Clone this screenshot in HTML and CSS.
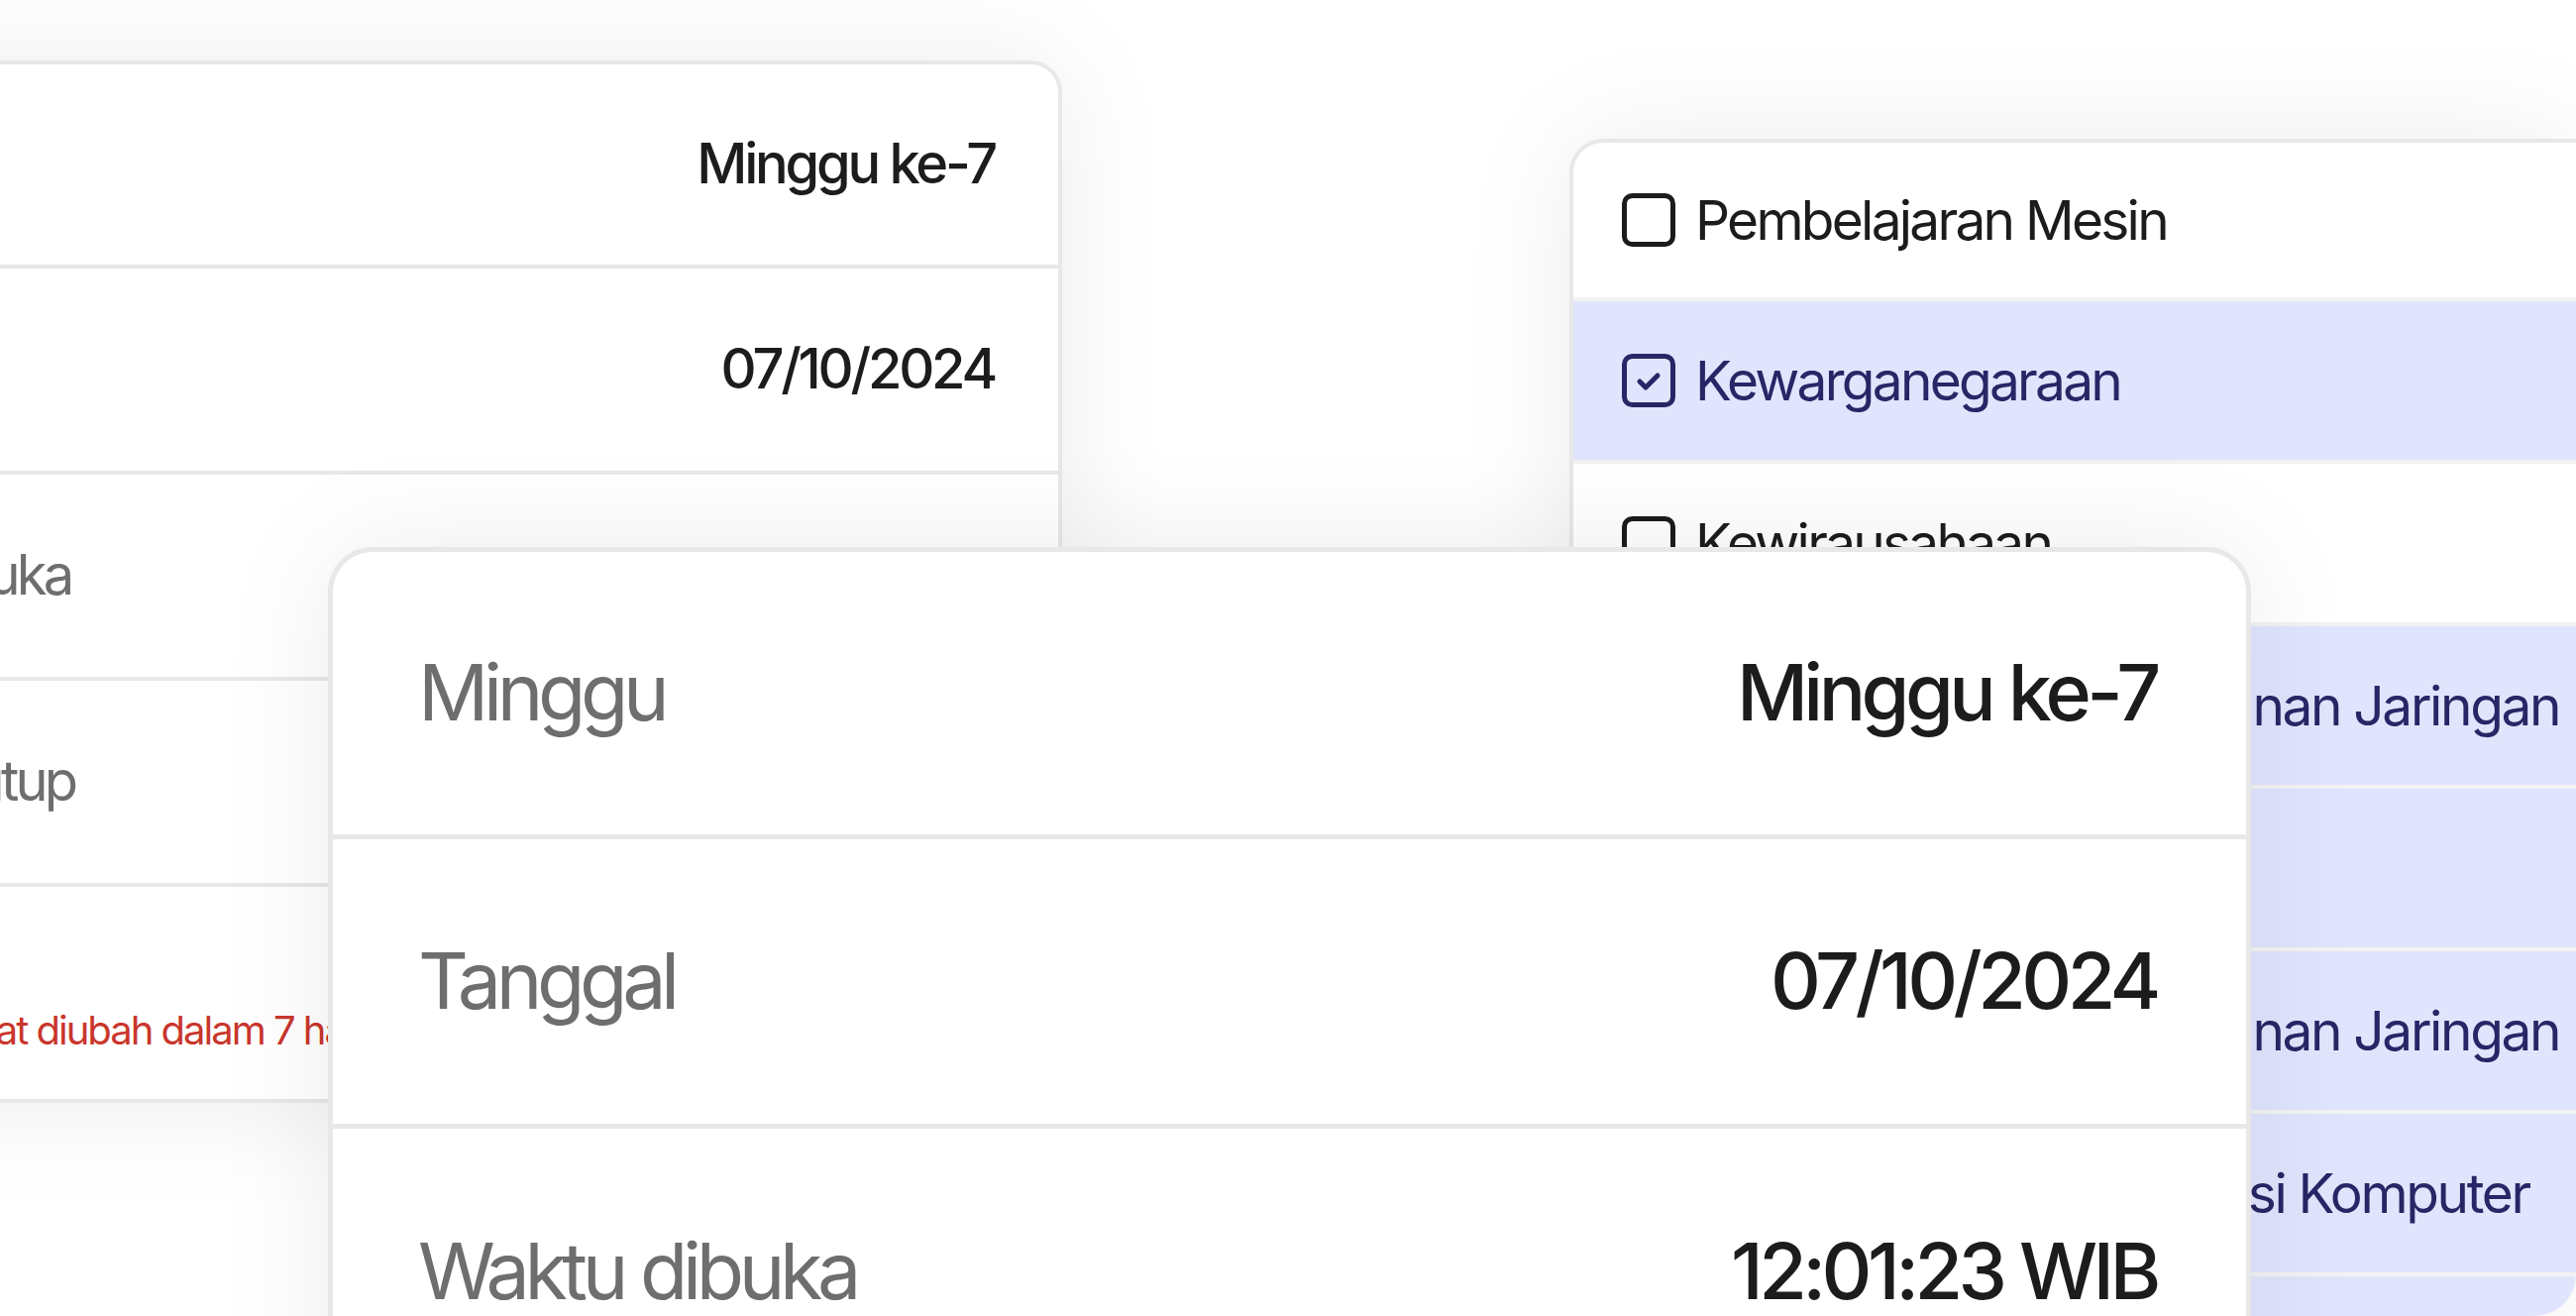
FILE: index.html
```html
<!DOCTYPE html>
<html lang="id">
<head>
<meta charset="utf-8">
<title>Jadwal Presensi</title>
<link rel="stylesheet" href="styles.css">
</head>
<body>
<div class="canvas">

  <section class="card card--back">
    <div class="info-row"><span class="label">Minggu</span><span class="value">Minggu ke-7</span></div>
    <div class="info-row"><span class="label">Tanggal</span><span class="value">07/10/2024</span></div>
    <div class="info-row"><span class="label">Waktu dibuka</span><span class="value">12:01:23 WIB</span></div>
    <div class="info-row"><span class="label">Waktu ditutup</span><span class="value">13:01:23 WIB</span></div>
    <div class="info-row info-row--note">
      <span class="label">Status</span>
      <span class="note">Nilai tidak dapat diubah dalam 7 hari</span>
    </div>
  </section>

  <section class="card card--list">
    <div class="list-item">
      <svg class="check" viewBox="0 0 54 54"><rect x="2.5" y="2.5" width="49" height="49" rx="8"/></svg>
      <span>Pembelajaran Mesin</span>
    </div>
    <div class="list-item is-selected">
      <svg class="check" viewBox="0 0 54 54"><rect x="2.5" y="2.5" width="49" height="49" rx="8"/><path d="M18 28 L24 34 L36 22"/></svg>
      <span>Kewarganegaraan</span>
    </div>
    <div class="list-item">
      <svg class="check" viewBox="0 0 54 54"><rect x="2.5" y="2.5" width="49" height="49" rx="8"/></svg>
      <span>Kewirausahaan</span>
    </div>
    <div class="list-item is-selected">
      <svg class="check" viewBox="0 0 54 54"><rect x="2.5" y="2.5" width="49" height="49" rx="8"/><path d="M18 28 L24 34 L36 22"/></svg>
      <span class="wide">Manajemen dan Keamanan Jaringan</span>
    </div>
    <div class="list-item is-selected">
      <svg class="check" viewBox="0 0 54 54"><rect x="2.5" y="2.5" width="49" height="49" rx="8"/><path d="M18 28 L24 34 L36 22"/></svg>
      <span>Basis Data</span>
    </div>
    <div class="list-item is-selected">
      <svg class="check" viewBox="0 0 54 54"><rect x="2.5" y="2.5" width="49" height="49" rx="8"/><path d="M18 28 L24 34 L36 22"/></svg>
      <span class="wide">Manajemen dan Keamanan Jaringan</span>
    </div>
    <div class="list-item is-selected">
      <svg class="check" viewBox="0 0 54 54"><rect x="2.5" y="2.5" width="49" height="49" rx="8"/><path d="M18 28 L24 34 L36 22"/></svg>
      <span class="wide">Arsitektur dan Organisasi Komputer</span>
    </div>
    <div class="list-item is-selected">
      <svg class="check" viewBox="0 0 54 54"><rect x="2.5" y="2.5" width="49" height="49" rx="8"/><path d="M18 28 L24 34 L36 22"/></svg>
      <span>Sistem Operasi</span>
    </div>
  </section>

  <section class="card card--front">
    <div class="info-row"><span class="label">Minggu</span><span class="value">Minggu ke-7</span></div>
    <div class="info-row"><span class="label">Tanggal</span><span class="value">07/10/2024</span></div>
    <div class="info-row"><span class="label">Waktu dibuka</span><span class="value">12:01:23 WIB</span></div>
    <div class="info-row"><span class="label">Waktu ditutup</span><span class="value">13:01:23 WIB</span></div>
  </section>

</div>
</body>
</html>
```

FILE: styles.css
```css
* { box-sizing: border-box; }

html, body {
  margin: 0;
  padding: 0;
  background: #ffffff;
  overflow: hidden;
}

.canvas {
  position: relative;
  width: 2600px;
  height: 1328px;
  overflow: hidden;
  background: #ffffff;
  font-family: Inter, "Noto Sans", "Liberation Sans", sans-serif;
}

/* ---------- generic card ---------- */
.card {
  --u: 1;
  position: absolute;
  background: #ffffff;
  border: calc(4px * var(--u)) solid #e8e8e8;
  border-radius: calc(32px * var(--u));
  box-shadow: 0 0 120px rgba(0, 0, 0, 0.075);
  overflow: hidden;
}

.card--back {
  --u: 1;
  left: -307px;
  top: 61px;
  width: 1379px;
}

.card--front {
  --u: 1.41;
  left: 331px;
  top: 552px;
  width: 1941px;
}

/* ---------- info rows ---------- */
.info-row {
  box-sizing: content-box;
  display: flex;
  align-items: center;
  justify-content: space-between;
  height: calc(204px * var(--u));
  padding: 0 calc(64px * var(--u)) 0 calc(61px * var(--u));
  border-bottom: calc(4px * var(--u)) solid #e8e8e8;
  font-size: calc(56px * var(--u));
  letter-spacing: -0.058em;
  white-space: nowrap;
}

.info-row:first-child {
  height: calc(202px * var(--u));
}

.info-row:last-child {
  border-bottom: 0;
}

.info-row--note {
  height: calc(214px * var(--u));
  flex-direction: column;
  align-items: flex-start;
  justify-content: center;
  gap: calc(8px * var(--u));
}

.label {
  color: #6e6e6e;
  font-weight: 400;
  line-height: 1.2;
  letter-spacing: -0.068em;
}

.value {
  color: #1c1c1c;
  font-weight: 500;
  line-height: 1.2;
}

.note {
  color: #c9362c;
  font-size: calc(40px * var(--u));
  line-height: 1.2;
  letter-spacing: -0.05em;
}

/* ---------- course list ---------- */
.card--list {
  left: 1584px;
  top: 140px;
  width: 1016px;
  height: 1188px;
  border-right: 0;
  border-bottom: 0;
  border-radius: 34px 0 42px 0;
}

.list-item {
  box-sizing: content-box;
  display: flex;
  align-items: center;
  gap: 20px;
  height: 160px;
  padding-left: 49px;
  border-bottom: 4px solid #f2f2f4;
  font-size: 55px;
  letter-spacing: -0.05em;
  color: #1c1c1c;
  white-space: nowrap;
}

.list-item:first-child {
  height: 156px;
}

.list-item.is-selected {
  background: #e0e5fd;
  color: #2a2566;
}

.list-item .wide {
  letter-spacing: -0.043em;
}

.check {
  flex: none;
  width: 54px;
  height: 54px;
  fill: none;
  stroke: currentColor;
  stroke-width: 5;
  stroke-linecap: round;
  stroke-linejoin: round;
}
```
